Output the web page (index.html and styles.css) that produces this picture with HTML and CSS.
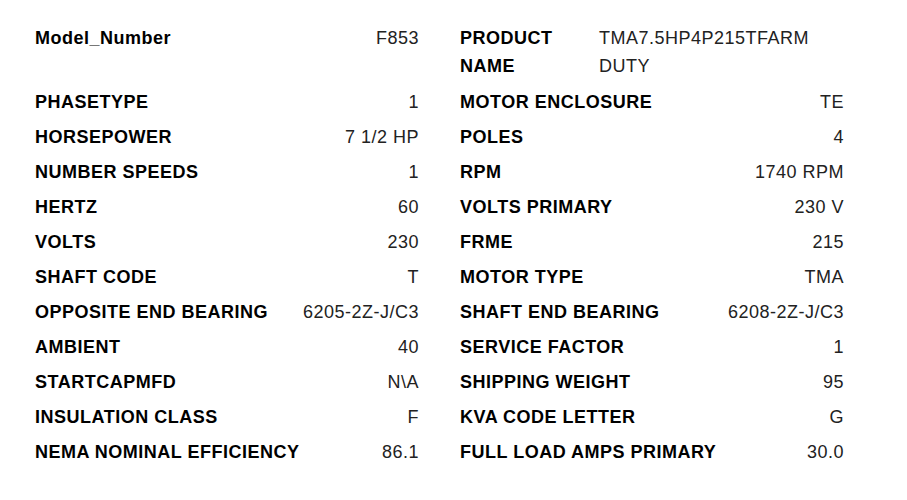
FILE: index.html
```html
<!DOCTYPE html>
<html>
<head>
<meta charset="utf-8">
<link rel="stylesheet" href="styles.css">
</head>
<body>
<div class="specs">
  <div class="col">
    <div class="row"><span class="k">Model_Number</span><span class="v">F853</span></div>
    <div class="row row-tall"><span class="k">PHASETYPE</span><span class="v">1</span></div>
    <div class="row"><span class="k">HORSEPOWER</span><span class="v">7 1/2 HP</span></div>
    <div class="row"><span class="k">NUMBER SPEEDS</span><span class="v">1</span></div>
    <div class="row"><span class="k">HERTZ</span><span class="v">60</span></div>
    <div class="row"><span class="k">VOLTS</span><span class="v">230</span></div>
    <div class="row"><span class="k">SHAFT CODE</span><span class="v">T</span></div>
    <div class="row"><span class="k">OPPOSITE END BEARING</span><span class="v">6205-2Z-J/C3</span></div>
    <div class="row"><span class="k">AMBIENT</span><span class="v">40</span></div>
    <div class="row"><span class="k">STARTCAPMFD</span><span class="v">N\A</span></div>
    <div class="row"><span class="k">INSULATION CLASS</span><span class="v">F</span></div>
    <div class="row"><span class="k">NEMA NOMINAL EFFICIENCY</span><span class="v">86.1</span></div>
  </div>
  <div class="col">
    <div class="row row-wrap"><span class="k">PRODUCT NAME</span><span class="v">TMA7.5HP4P215TFARM DUTY</span></div>
    <div class="row row-next"><span class="k">MOTOR ENCLOSURE</span><span class="v">TE</span></div>
    <div class="row"><span class="k">POLES</span><span class="v">4</span></div>
    <div class="row"><span class="k">RPM</span><span class="v">1740 RPM</span></div>
    <div class="row"><span class="k">VOLTS PRIMARY</span><span class="v">230 V</span></div>
    <div class="row"><span class="k">FRME</span><span class="v">215</span></div>
    <div class="row"><span class="k">MOTOR TYPE</span><span class="v">TMA</span></div>
    <div class="row"><span class="k">SHAFT END BEARING</span><span class="v">6208-2Z-J/C3</span></div>
    <div class="row"><span class="k">SERVICE FACTOR</span><span class="v">1</span></div>
    <div class="row"><span class="k">SHIPPING WEIGHT</span><span class="v">95</span></div>
    <div class="row"><span class="k">KVA CODE LETTER</span><span class="v">G</span></div>
    <div class="row"><span class="k">FULL LOAD AMPS PRIMARY</span><span class="v">30.0</span></div>
  </div>
</div>
</body>
</html>
```
FILE: styles.css
```css
html, body {
  margin: 0;
  padding: 0;
  background: #ffffff;
}
body {
  font-family: "Liberation Sans", Arial, sans-serif;
  font-size: 18px;
  line-height: 28px;
  letter-spacing: 0.5px;
}
.specs {
  display: grid;
  grid-template-columns: 384px 384px;
  column-gap: 41px;
  padding: 24px 0 0 35px;
}
.col {
  display: flex;
  flex-direction: column;
  gap: 7px;
}
.row {
  display: flex;
  justify-content: space-between;
  align-items: flex-start;
}
.row-tall {
  margin-top: 29px;
}
.row-next {
  margin-top: 1px;
}
.k {
  font-weight: 700;
  color: #000;
}
.v {
  color: #222;
}
.row-wrap {
  display: grid;
  grid-template-columns: 139px 1fr;
}
.row-wrap .k {
  width: 110px;
}
.row-wrap .v {
  width: 220px;
}
```
